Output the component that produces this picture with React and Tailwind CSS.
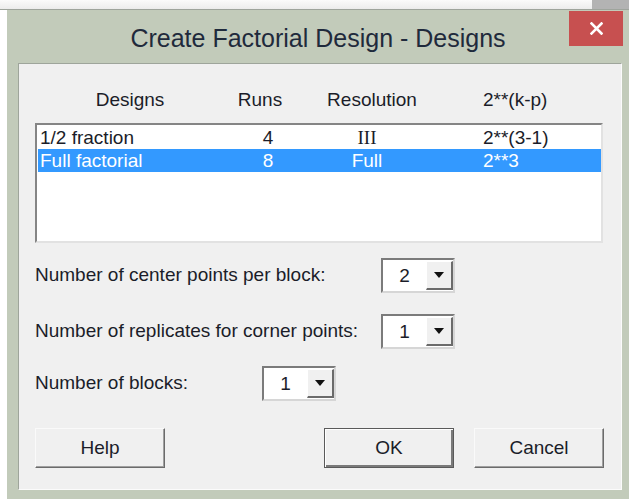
import React from "react";

const SANS = "font-['Liberation_Sans',Arial,sans-serif]";
const INK = "text-[#1b1d29]";

function Caret() {
  return (
    <svg width="10" height="6" viewBox="0 0 10 6" aria-hidden="true">
      <path d="M0 0h10L5 6z" fill="#111" />
    </svg>
  );
}

function Combo({ value }) {
  return (
    <div className="flex h-[35px] w-[74px] shrink-0 border-2 border-t-[#7b7b7b] border-l-[#7b7b7b] border-b-[#d6d6d6] border-r-[#d6d6d6] bg-white py-px">
      <div className="flex flex-1 items-center justify-center text-[19px] leading-none">{value}</div>
      <div className="flex w-[27px] items-center justify-center border-t border-l border-t-white border-l-white border-b-2 border-r-2 border-b-[#6b6b6b] border-r-[#6b6b6b] bg-[#f0f0f0]">
        <Caret />
      </div>
    </div>
  );
}

function Btn({ children, primary }) {
  return (
    <button
      className={
        primary
          ? "h-[40px] w-[130px] border border-[#5a5a5a] bg-[#f0f0f0] p-0 text-[19px] shadow-[inset_1px_1px_0_#ffffff,inset_-2px_-2px_0_#7a7a7a]"
          : "h-[40px] w-[130px] border border-t-[#fafafa] border-l-[#fafafa] border-b-[#6b6b6b] border-r-[#6b6b6b] bg-[#f0f0f0] p-0 text-[19px] shadow-[inset_-1px_-1px_0_#a0a0a0]"
      }
    >
      {children}
    </button>
  );
}

function Row({ cells, selected }) {
  return (
    <div
      className={
        selected
          ? "grid h-[23px] grid-cols-[192px_76px_122px_55px_1fr] bg-[#3399ff] text-[19px] leading-[23px] text-white"
          : "grid h-[23px] grid-cols-[192px_76px_122px_55px_1fr] text-[19px] leading-[23px]"
      }
    >
      <span className="pl-[2px]">{cells[0]}</span>
      <span className="text-center">{cells[1]}</span>
      <span className="text-center">{cells[2]}</span>
      <span />
      <span>{cells[3]}</span>
    </div>
  );
}

export default function App() {
  return (
    <div className={`h-[499px] w-[629px] overflow-hidden bg-white ${SANS} ${INK}`}>
      {/* strip of the window behind */}
      <div className="flex h-[10px] border-b border-[#9ea49c]">
        <div className="flex-1 bg-gradient-to-b from-[#fbfbfb] to-[#ececec]" />
        <div className="w-[37px] bg-[#b3b3b3]" />
      </div>

      <div className="flex h-[489px]">
        <div className="w-[7px] bg-white" />
        <div className="flex-1 bg-[#c2cbba]">
          {/* title bar */}
          <div className="relative h-[53px] pt-[13px] text-center">
            <span className="text-[25px] leading-[30px] text-[#1f2a3c]">Create Factorial Design - Designs</span>
            <div className="absolute right-[6px] top-px flex h-[35px] w-[54px] items-center justify-center bg-[#c75050]">
              <svg width="13" height="13" viewBox="0 0 13 13" aria-hidden="true">
                <path d="M1.5 1.5l10 10M11.5 1.5l-10 10" stroke="#fff" strokeWidth="2.6" strokeLinecap="square" />
              </svg>
            </div>
          </div>

          {/* dialog body */}
          <div className="ml-[11px] mr-[7px] h-[427px] border border-t-[#9ea59b] border-l-[#9ea59b] border-b-[#fbfbfb] border-r-[#fbfbfb] bg-[#f0f0f0] pl-[16px] pt-[24px]">
            <div className="grid h-[23px] grid-cols-[190px_70px_154px_34px_1fr] text-[19px] leading-[23px]">
              <span className="text-center">Designs</span>
              <span className="text-center">Runs</span>
              <span className="text-center">Resolution</span>
              <span />
              <span>2**(k-p)</span>
            </div>

            <div className="mt-[12px] h-[120px] w-[568px] border-2 border-t-[#858585] border-l-[#858585] border-b-[#e2e2e2] border-r-[#e2e2e2] bg-white pl-px pt-px">
              <Row cells={["1/2 fraction", "4", <span className="font-['Liberation_Serif',serif]">III</span>, "2**(3-1)"]} />
              <Row cells={["Full factorial", "8", "Full", "2**3"]} selected />
            </div>

            <div className="mt-[15px] flex items-center">
              <span className="w-[346px] text-[19px]">Number of center points per block:</span>
              <Combo value="2" />
            </div>
            <div className="mt-[21px] flex items-center">
              <span className="w-[346px] text-[19px]">Number of replicates for corner points:</span>
              <Combo value="1" />
            </div>
            <div className="mt-[17px] flex items-center">
              <span className="w-[227px] text-[19px]">Number of blocks:</span>
              <Combo value="1" />
            </div>

            <div className="mt-[27px] flex w-[569px] justify-between">
              <Btn>Help</Btn>
              <div className="flex gap-[20px]">
                <Btn primary>OK</Btn>
                <Btn>Cancel</Btn>
              </div>
            </div>
          </div>
        </div>
      </div>
    </div>
  );
}
